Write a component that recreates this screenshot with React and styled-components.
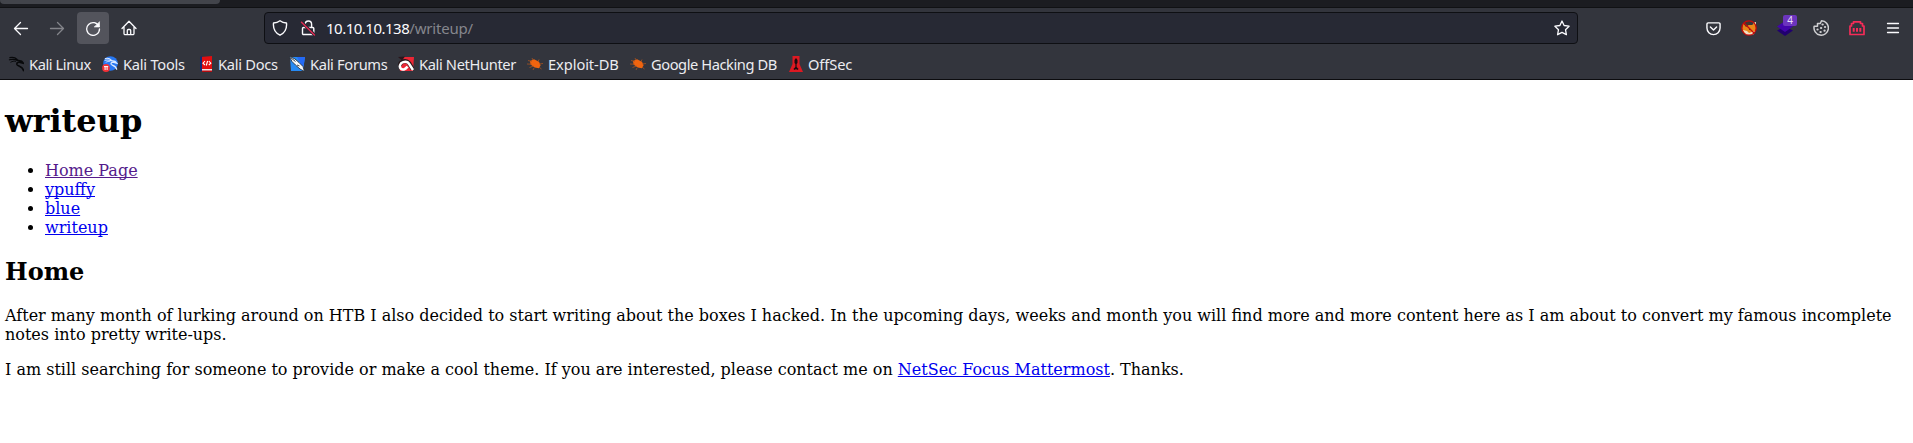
import React from 'react';
import styled, { createGlobalStyle } from 'styled-components';

const Global = createGlobalStyle`
  body { margin: 0; background: #fff; }
  * { box-sizing: border-box; }
`;

const Chrome = styled.header`
  height: 80px;
  background: #33353d;
  border-bottom: 1px solid #0c0c0f;
  font-family: 'Noto Sans', sans-serif;
  color: #fbfbfe;
`;
const TabStrip = styled.div`
  height: 8px;
  background: #1b1c21;
  border-bottom: 1px solid #101114;
`;
const ActiveTab = styled.div`
  width: 220px;
  height: 4px;
  background: #42444b;
  border-radius: 0 0 4px 4px;
`;
const NavBar = styled.div`
  height: 40px;
  display: flex;
  align-items: center;
  padding: 0 5px;
`;
const ToolButton = styled.div`
  width: 32px;
  height: 32px;
  margin-right: ${p => p.$gap ?? 4}px;
  display: flex;
  align-items: center;
  justify-content: center;
  border-radius: 4px;
  position: relative;
  background: ${p => (p.$active ? '#53545c' : 'transparent')};
  opacity: ${p => (p.$dim ? 0.4 : 1)};
`;
const UrlBar = styled.div`
  width: 1314px;
  height: 32px;
  margin-left: 119px;
  display: flex;
  align-items: center;
  background: #272934;
  border: 1px solid #0e0f13;
  border-radius: 4px;
  padding: 0 7px;
`;
const Address = styled.div`
  flex: 1;
  margin-left: 10px;
  font-size: 15px;
  line-height: 20px;
  letter-spacing: -0.5px;
  color: #fbfbfe;
`;
const Path = styled.span`
  color: #85868d;
  letter-spacing: -0.2px;
`;
const UrlIcon = styled.span`
  display: flex;
  margin-right: ${p => p.$gap || 0}px;
`;
const Actions = styled.div`
  display: flex;
  margin-left: auto;
`;
const Badge = styled.span`
  position: absolute;
  left: 14px;
  top: 3px;
  width: 14px;
  height: 11px;
  background: #6c35bd;
  border-radius: 2px;
  font-size: 10px;
  line-height: 11px;
  text-align: center;
  color: #e9ddfb;
`;
const Bookmarks = styled.nav`
  height: 31px;
  display: flex;
  align-items: center;
  padding: 0 0 0 8px;
`;
const Bookmark = styled.div`
  width: ${p => p.$w}px;
  flex: none;
  display: flex;
  align-items: center;
  gap: 5px;
  font-size: 14.67px;
  line-height: 20px;
  letter-spacing: ${p => p.$track}px;
  white-space: nowrap;
  color: #ececf0;
  svg { flex: none; }
`;
const Page = styled.main`
  padding: 0 8px 0 5px;
  font: 16px/19px 'DejaVu Serif', serif;
  color: #000;
  display: flow-root;
`;
const Title = styled.h1`
  font-size: 32px;
  line-height: 38px;
  margin: 22px 0 21px;
`;
const Subtitle = styled.h2`
  font-size: 24px;
  line-height: 28px;
  margin: 21px 0 20px;
`;
const List = styled.ul`
  margin: 16px 0;
  padding-left: 40px;
`;
const Text = styled.p`
  margin: 16px 0;
`;
const Link = styled.a`
  color: ${p => (p.$visited ? '#551a8b' : '#0000ee')};
  text-decoration: underline;
  text-decoration-skip-ink: none;
`;

const Line = ({ children, color = '#fbfbfe', w = 1.3, size = 16 }) => (
  <svg width={size} height={size} viewBox="0 0 16 16" fill="none" stroke={color} strokeWidth={w} strokeLinecap="round" strokeLinejoin="round">
    {children}
  </svg>
);
const Fill = ({ children }) => <svg width="16" height="16" viewBox="0 0 16 16">{children}</svg>;

const Dragon = ({ color }) => (
  <g fill="none" stroke={color} strokeLinecap="round">
    <path d="M1 1.200c3-.6 6 .1 7.700 2M.5 3.500c3-.8 6-.4 8.500.7" strokeWidth="1.300" />
    <path d="M2 6c1.500-1 3.500-1.200 5-.8" strokeWidth="1" />
    <path d="M9 4l4.500 1 2 2.300-3.500-1c-2-.6-4 .3-3.500 2.200.6 1.900 6 1.300 7 6.500" strokeWidth="1.700" />
  </g>
);
const Bug = () => (
  <Fill>
    <path d="M3 5l4-1.800 5 2.500 1.600 3.500-1.700 3-4.200-.8-4.200-3z" fill="#f0640f" />
    <path d="M1 4.500l4 1M0 8l5 .2M2.500 11.500l4-1.500M7 12l-1 2M11 5.500l1-2M12 8l4-.5M12 11l2.500 2M6 4l-1-2" stroke="#b9571d" strokeWidth=".7" />
  </Fill>
);

const bookmarks = [
  { label: 'Kali Linux', w: 94, track: -0.42, icon: <svg width="16" height="16" viewBox="-1 0 17 16"><Dragon color="#08090b" /></svg> },
  {
    label: 'Kali Tools', w: 97, track: -0.25, icon: (
      <Fill>
        <circle cx="8.500" cy="7.500" r="7.300" fill="#2777f2" />
        <g transform="translate(2.500 1.500) scale(.78)"><Dragon color="#d9e9ff" /></g>
        <circle cx="4" cy="12" r="3.900" fill="#f03136" />
        <path d="M2 10.600h4.200M3.100 10.600v3.400M5.100 10.600v3.400" stroke="#fff" />
      </Fill>
    ),
  },
  {
    label: 'Kali Docs', w: 90, track: -0.28, icon: (
      <svg width="14" height="16" viewBox="0 0 14 16">
        <path d="M2 1L13 0v13H2z" fill="#e00e10" />
        <path d="M2 13h11v2H2z" fill="#f2e3e3" />
        <path d="M1 1l2-1v15H1z" fill="#122a72" />
        <path d="M3 14.500h10V16H3z" fill="#b40b10" />
        <path d="M6 5l-2 2.200L6 9M9.800 5l2 2.200-2 1.800M8.600 5L7.300 9.500" stroke="#fff" fill="none" strokeWidth="1.100" />
      </svg>
    ),
  },
  {
    label: 'Kali Forums', w: 109, track: -0.32, icon: (
      <Fill>
        <path d="M1 1h15l-2 14H2z" fill="#268af4" />
        <path d="M8 1h8l-2 12z" fill="#2469f5" />
        <path d="M0 0l6 3 4 3.500 4 4 1.500 5L11 13 6.500 9 3 5.500z" fill="#f4f7f9" stroke="#1c2530" strokeWidth=".8" />
        <path d="M1.500 1.500l5 4M8 9l2.500 1" stroke="#27313c" strokeWidth=".9" />
      </Fill>
    ),
  },
  {
    label: 'Kali NetHunter', w: 129, track: -0.36, icon: (
      <Fill>
        <path d="M4 1h12l-1 14H2L1 8z" fill="#ec2635" />
        <path d="M0 1l7-.5L4 4.500z" fill="#2a171c" />
        <path d="M1.800 10C2 5 8 3.500 11 7l3.800 6.500" fill="none" stroke="#25181c" strokeWidth="4.200" />
        <path d="M9.500 10.500c-1.500 2.500-4.500 4-6.500 2.300C.8 10.800 2 7 5.200 6.100 8 5.400 10.300 6.200 11.500 8.500L15 14" fill="none" stroke="#fff" strokeWidth="2.500" />
        <path d="M5 10c.5-1.800 2.500-2.200 4-1" fill="none" stroke="#e4303c" strokeWidth="1" />
      </Fill>
    ),
  },
  { label: 'Exploit-DB', w: 103, track: -0.08, icon: <Bug /> },
  { label: 'Google Hacking DB', w: 159, track: -0.43, icon: <Bug /> },
  {
    label: 'OffSec', w: 70, track: -0.1, icon: (
      <svg width="14" height="16" viewBox="0 0 14 16">
        <path d="M3.500 0h7v8l3.500 8H0l3.500-8z" fill="#dc1922" />
        <path d="M7 2l1.500 2v3L7.600 8v3l2 2-1.300 1L7 13l-1.300 1-1.300-1 2-2V8l-.9-1V4z" fill="#180c10" />
      </svg>
    ),
  },
];

export default function App() {
  return (
    <>
      <Global />
      <Chrome>
        <TabStrip><ActiveTab /></TabStrip>
        <NavBar>
          <ToolButton><Line><path d="M1.500 8.500h13M7.500 2.500l-6 6 6 6" /></Line></ToolButton>
          <ToolButton $dim><Line><path d="M1.500 8.500h13M8.500 2.500l6 6-6 6" /></Line></ToolButton>
          <ToolButton $active>
            <Line><path d="M14 6.500A6.400 6.400 0 1 0 14.500 9" /><path d="M14.500 2v5h-5z" fill="#fbfbfe" strokeWidth=".6" /></Line>
          </ToolButton>
          <ToolButton $gap={0}>
            <Line><path d="M1 8.500L8 1.200l7 7.300M3 7v6.500a1.200 1.200 0 0 0 1.200 1.200h7.600a1.200 1.200 0 0 0 1.200-1.200V7M6.300 14.500v-4a1 1 0 0 1 1-1h1.400a1 1 0 0 1 1 1v4" /></Line>
          </ToolButton>
          <UrlBar>
            <UrlIcon $gap={12}>
              <Line w={1.4}><path d="M8 .8c2 1.500 4.300 2.100 6.500 2.200.5 5-1.500 9.700-6.500 12.200C3 12.700 1 8 1.500 3 3.700 2.900 6 2.300 8 .8z" /></Line>
            </UrlIcon>
            <UrlIcon>
              <Line w={1.4}>
                <path d="M5.200 7V4.200a3.200 3.200 0 0 1 6.400 0V7M3.500 7.500h9.300a1 1 0 0 1 1 1v5a1 1 0 0 1-1 1H3.500a1 1 0 0 1-1-1v-5a1 1 0 0 1 1-1z" />
                <path d="M2 2.300l12.500 12.500" stroke="#272934" strokeWidth="3.200" />
                <path d="M1.500 2.300l13 12.700" stroke="#e22850" />
              </Line>
            </UrlIcon>
            <Address>10.10.10.138<Path>/writeup/</Path></Address>
            <UrlIcon>
              <Line w={1.3}><path d="M8 1l2.100 4.500 5 .7-3.600 3.500.9 5L8 12.400l-4.400 2.300.9-5L.9 6.200l5-.7z" /></Line>
            </UrlIcon>
          </UrlBar>
          <Actions>
            <ToolButton><Line w={1.5} size={15}><path d="M2.200 2h11.600a1.200 1.200 0 0 1 1.200 1.200V7.500a7 7 0 0 1-14 0V3.200A1.200 1.200 0 0 1 2.200 2zM4.700 6.300L8 9.500l3.300-3.200" /></Line></ToolButton>
            <ToolButton>
              <Fill>
                <path d="M2 3l4 2h5l4-3v7l-2 5-5 1-5-2-2-4z" fill="#e98718" />
                <path d="M2 10l4 1 2 2 6-2-2 4H5zM12 3l3-1v3z" fill="#f1dfc5" />
                <path d="M2 3l5-1.500L9 4 5 7zM8 9h2v1H8z" fill="#42352f" />
                <circle cx="8" cy="8" r="7.200" fill="none" stroke="#c50a0a" strokeWidth="1.300" />
                <path d="M3 3l10 10" stroke="#c50a0a" strokeWidth="1.200" />
              </Fill>
            </ToolButton>
            <ToolButton>
              <Fill>
                <path d="M0 10.500l8-4 8 4-8 5.500z" fill="#21006f" />
                <path d="M0 6.500L8 1l8 5.500-8 5.500z" fill="#4205aa" />
              </Fill>
              <Badge>4</Badge>
            </ToolButton>
            <ToolButton>
              <Line color="#d0d0d3" w={1.5}>
                <path d="M8.500.8a7.200 7.200 0 1 1-7.300 5.500h3.300V3.500h2.800z" />
                <path d="M9.500 4.500h.2M12 7h.1M8 8h.2M4.500 9.500h.1M11.500 10.700h.1M7.500 12h.2" strokeWidth="2.200" />
              </Line>
            </ToolButton>
            <ToolButton>
              <Line color="#f62c58" w={1.7}><path d="M1 14.500V6h1.500V3.500h2V1.800h7v1.700h2V6H15v8.500z" /><path d="M4.700 8v3.800M8 8v3.800M11.300 8v3.800" strokeWidth="2" strokeLinecap="butt" /></Line>
            </ToolButton>
            <ToolButton $gap={-1}><Line w={1.3}><path d="M2.500 3.500h11M2.500 8h11M2.500 12.500h11" /></Line></ToolButton>
          </Actions>
        </NavBar>
        <Bookmarks>
          {bookmarks.map(b => (
            <Bookmark key={b.label} $w={b.w} $track={b.track}>{b.icon}<span>{b.label}</span></Bookmark>
          ))}
        </Bookmarks>
      </Chrome>
      <Page>
        <Title>writeup</Title>
        <List>
          <li><Link href="#" $visited>Home Page</Link></li>
          <li><Link href="#">ypuffy</Link></li>
          <li><Link href="#">blue</Link></li>
          <li><Link href="#">writeup</Link></li>
        </List>
        <Subtitle>Home</Subtitle>
        <Text>
          After many month of lurking around on HTB I also decided to start writing about the boxes I hacked. In the upcoming days, weeks and month you will find more and more content here as I am about to convert my famous incomplete notes into pretty write-ups.
        </Text>
        <Text>
          I am still searching for someone to provide or make a cool theme. If you are interested, please contact me on <Link href="#">NetSec Focus Mattermost</Link>. Thanks.
        </Text>
      </Page>
    </>
  );
}
